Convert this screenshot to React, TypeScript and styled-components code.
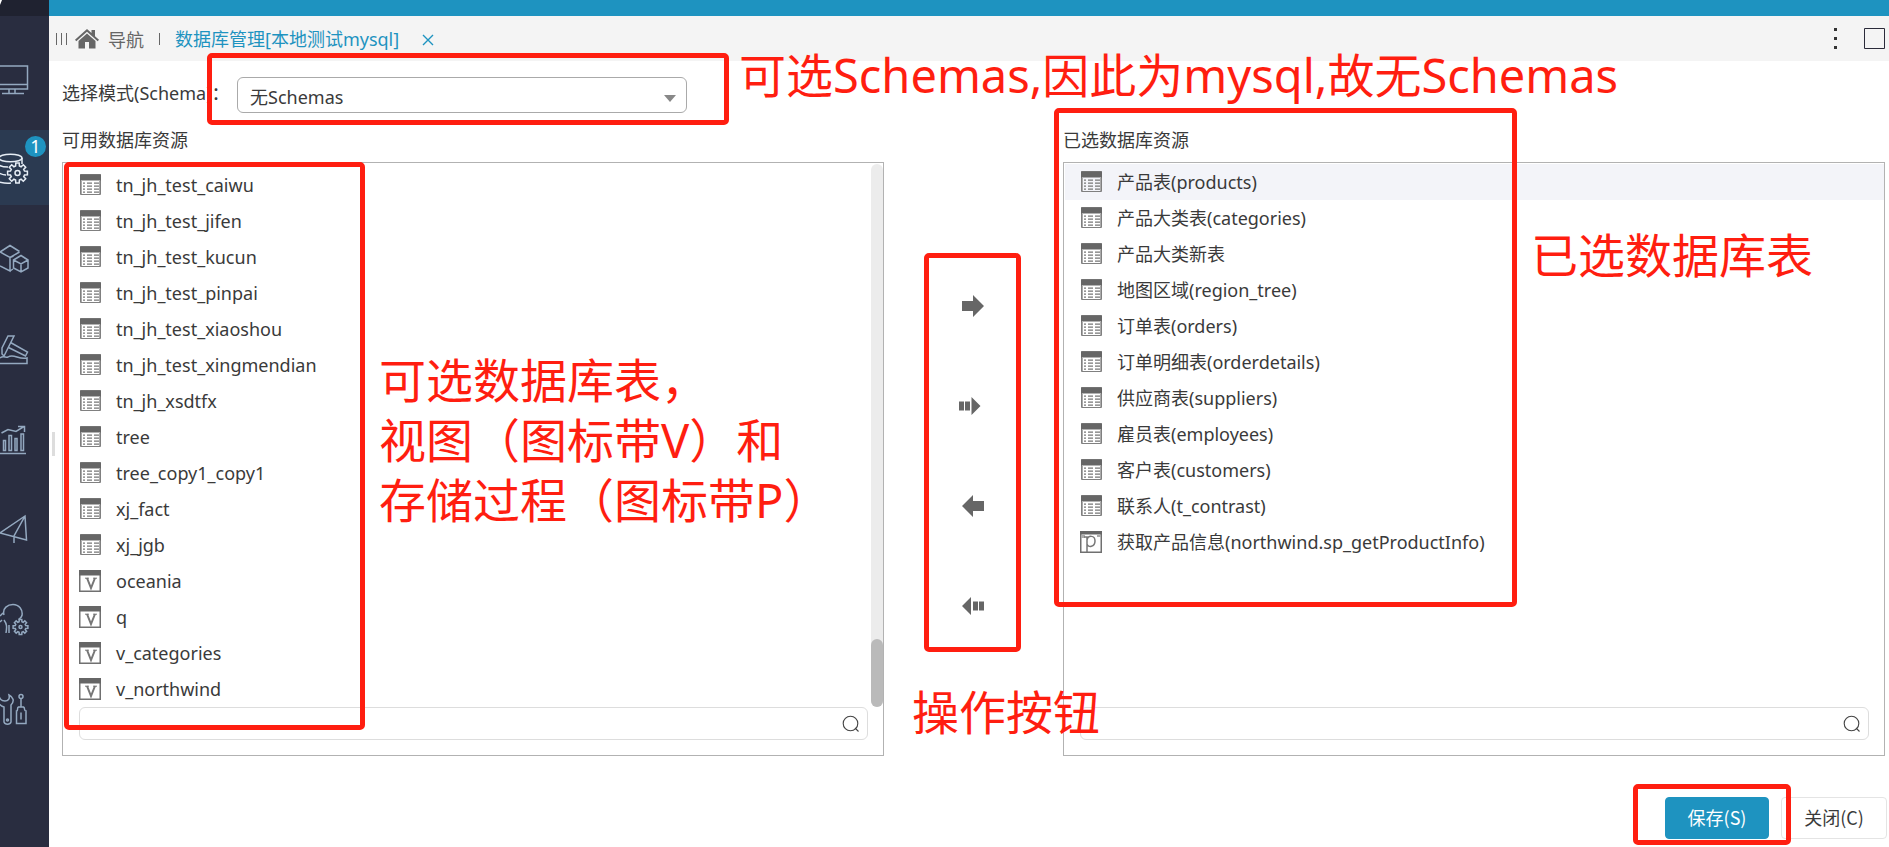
import React from "react";
import styled, { createGlobalStyle, css } from "styled-components";

const FONT = '"Noto Sans", "Noto Sans CJK SC", sans-serif';
const CJK_FONT = '"Noto Sans CJK SC", sans-serif';
const RED = "#ff1e10";
const BLUE = "#1e93c0";
const GREY = "#666666";

const GlobalStyle = createGlobalStyle`
  * { box-sizing: border-box; }
  body {
    margin: 0;
    background: #ffffff;
    color: #3a3a3a;
    font-family: ${FONT};
    font-size: 18px;
    line-height: 24px;
  }
  button, input, select { font: inherit; color: inherit; }
`;

const Shell = styled.div`
  display: flex;
  min-height: 100vh;
  overflow: hidden;
`;

const Sidebar = styled.nav`
  flex: 0 0 49px;
  background: #292d40;
`;

const Brand = styled.div`
  height: 16px;
  margin-bottom: 24px;
  background: #1f2230;
  svg { display: block; }
`;

const Menu = styled.div`
  display: flex;
  flex-direction: column;
  gap: 15px;
`;

const MenuItem = styled.button<{ $active?: boolean }>`
  position: relative;
  display: flex;
  align-items: center;
  height: 75px;
  padding: 0;
  border: 0;
  background: ${(p) => (p.$active ? "#2b3a51" : "transparent")};
  color: ${(p) => (p.$active ? "#e6edf5" : "#94a9c0")};
`;

const Badge = styled.span`
  position: absolute;
  top: 6px;
  right: 3px;
  width: 21px;
  height: 21px;
  border-radius: 50%;
  background: ${BLUE};
  color: #ffffff;
  line-height: 21px;
  text-align: center;
`;

const Main = styled.div`
  position: relative;
  flex: 1;
  min-width: 0;
`;

const TopBar = styled.div`
  height: 16px;
  background: ${BLUE};
`;

const TabBar = styled.header`
  display: flex;
  align-items: center;
  height: 45px;
  padding: 0 4px 0 7px;
  background: #f4f4f4;
  font-family: ${CJK_FONT};
`;

const NavLink = styled.a`
  display: flex;
  align-items: center;
  gap: 9px;
  color: ${GREY};
  text-decoration: none;
`;

const Grip = styled.span`
  width: 11px;
  height: 12px;
  margin-right: 8px;
  border: solid ${GREY};
  border-width: 0 1px;
  background: linear-gradient(${GREY}, ${GREY}) center / 1px 100% no-repeat;
`;

const Separator = styled.span`
  width: 1px;
  height: 12px;
  margin: 0 15px;
  background: ${GREY};
`;

const TabLink = styled.a`
  color: ${BLUE};
  text-decoration: none;
  font-family: ${FONT};
`;

const IconButton = styled.button`
  display: flex;
  align-items: center;
  justify-content: center;
  padding: 0;
  border: 0;
  background: none;
`;

const CloseTab = styled(IconButton)`
  margin-left: 23px;
  padding-top: 3px;
  color: ${BLUE};
`;

const WindowTools = styled.div`
  display: flex;
  align-items: center;
  gap: 26px;
  margin-left: auto;
`;

const Splitter = styled.div`
  position: absolute;
  top: 432px;
  left: 3px;
  width: 3px;
  height: 24px;
  background: #dddddd;
`;

const Content = styled.main`
  padding: 16px 4px 0 13px;
`;

const SchemaRow = styled.div`
  display: flex;
  align-items: center;
  height: 36px;
`;

const SchemaLabel = styled.label`
  flex: 0 0 175px;
  padding-bottom: 4px;
  white-space: nowrap;
`;

const SelectWrap = styled.div`
  position: relative;
  width: 450px;
  height: 36px;
`;

const Select = styled.select`
  appearance: none;
  width: 100%;
  height: 100%;
  padding: 4px 40px 0 12px;
  border: 1px solid #aaaaaa;
  border-radius: 6px;
  background: #ffffff;
`;

const Caret = styled.svg`
  position: absolute;
  top: 18px;
  right: 11px;
  pointer-events: none;
`;

const Transfer = styled.div`
  display: grid;
  grid-template-columns: 1fr 179px 1fr;
  padding-top: 15px;
`;

const Column = styled.section`
  position: relative;
  min-width: 0;
`;

const Heading = styled.h2`
  margin: 0 0 10px;
  font-size: 18px;
  font-weight: 400;
  line-height: 24px;
`;

const Panel = styled.div`
  display: flex;
  flex-direction: column;
  height: 594px;
  border: 1px solid #b2b2b2;
`;

const ListArea = styled.div`
  display: flex;
  flex: 1;
  min-height: 0;
`;

const List = styled.ul<{ $top: number }>`
  flex: 1;
  min-width: 0;
  margin: 0;
  padding: ${(p) => p.$top}px 0 0;
  list-style: none;
`;

const Row = styled.li<{ $selected?: boolean }>`
  display: flex;
  align-items: center;
  gap: 15px;
  height: 36px;
  padding-left: 15px;
  margin-left: 1px;
  white-space: nowrap;
  ${(p) => p.$selected && css`background: #f3f4f9;`}
`;

const ScrollTrack = styled.div`
  display: flex;
  flex-direction: column;
  justify-content: flex-end;
  width: 12px;
  margin-top: 1px;
  border-radius: 6px;
  background: #ececec;
`;

const ScrollThumb = styled.div`
  height: 68px;
  border-radius: 6px;
  background: #bababa;
`;

const SearchBox = styled.div`
  display: flex;
  align-items: center;
  height: 33px;
  margin: 0 15px 15px 16px;
  padding-right: 7px;
  border: 1px solid #dddddd;
  border-radius: 6px;
`;

const SearchInput = styled.input`
  flex: 1;
  min-width: 0;
  height: 28px;
  padding: 0 8px;
  border: 0;
  outline: 0;
  background: none;
`;

const Operations = styled.div`
  position: relative;
  display: flex;
  flex-direction: column;
  align-items: center;
  gap: 68px;
  padding: 162px 2px 0 0;
`;

const MoveButton = styled(IconButton)`
  width: 40px;
  height: 32px;
  color: ${GREY};
`;

const Footer = styled.footer`
  display: flex;
  justify-content: flex-end;
  gap: 12px;
  padding: 41px 2px 8px 0;
  margin-right: -4px;
`;

const ButtonHolder = styled.div`
  position: relative;
`;

const ActionButton = styled.button<{ $primary?: boolean }>`
  height: 42px;
  width: ${(p) => (p.$primary ? 104 : 106)}px;
  padding: 0 0 2px;
  border: 1px solid ${(p) => (p.$primary ? BLUE : "#e4e4e4")};
  border-radius: 4px;
  background: ${(p) => (p.$primary ? BLUE : "#ffffff")};
  color: ${(p) => (p.$primary ? "#ffffff" : "#3a3a3a")};
  font-family: ${CJK_FONT};
`;

interface MarkProps { $x: number; $y: number; $w: number; $h: number }

const Mark = styled.div<MarkProps>`
  position: absolute;
  z-index: 2;
  left: ${(p) => p.$x}px;
  top: ${(p) => p.$y}px;
  width: ${(p) => p.$w}px;
  height: ${(p) => p.$h}px;
  border: 5px solid ${RED};
  border-radius: 5px;
  pointer-events: none;
`;

const Note = styled.p<{ $x: number; $y: number }>`
  position: absolute;
  z-index: 3;
  left: ${(p) => p.$x}px;
  top: ${(p) => p.$y}px;
  margin: 0;
  color: ${RED};
  font-size: 47px;
  line-height: 60px;
  white-space: nowrap;
  pointer-events: none;
`;

type Kind = "table" | "view" | "proc";

const TableIcon = () => (
  <svg width="22" height="22" viewBox="0 0 22 22" fill="none">
    <path d="M1.5 .5h20v20h-20z" stroke="#808080" />
    <path d="M1 .5h21v6H1z" fill="#666" />
    <path d="M2 7h1v13H2zM20 7h1v13h-1z" fill="#aaa" />
    <g stroke="#777" strokeWidth="1.3">
      <path d="M4 9.2h2M8 9.2h5M15 9.2h5M4 12.2h2M8 12.2h5M15 12.2h5M4 15.2h2M8 15.2h5M15 15.2h5M4 18.2h2M8 18.2h5M15 18.2h5" />
    </g>
  </svg>
);

const ViewIcon = () => (
  <svg width="22" height="22" viewBox="0 0 22 22" fill="none">
    <path d="M.75 .75h20.5v20.5H.75z" stroke="#707070" strokeWidth="1.5" />
    <path d="M0 0h22v5.5H0z" fill="#666" />
    <path d="M6 8.2h4M14 8.2h4" stroke="#777" />
    <path d="M8 8l4 10 4-10" stroke="#777" strokeWidth="2" />
  </svg>
);

const ProcIcon = () => (
  <svg width="22" height="22" viewBox="0 0 22 22" fill="none">
    <path d="M.75 .75h20.5v20.5H.75z" stroke="#707070" strokeWidth="1.5" />
    <path d="M0 0h22v3.5H0z" fill="#666" />
    <path d="M1 4h4v3H1zM17 4h4v2h-4z" fill="#aaa" />
    <path d="M4 6h3v15M7 9c1-5 8-5 8 1s-7 7-8 3" stroke="#777" strokeWidth="1.5" />
  </svg>
);

const icons: Record<Kind, React.FC> = { table: TableIcon, view: ViewIcon, proc: ProcIcon };

const SearchIcon = () => (
  <svg width="18" height="18" viewBox="0 0 18 18" fill="none" stroke="#444" strokeWidth="1.1">
    <circle cx="8.5" cy="8.5" r="7.3" />
    <path d="M13 13l3.5 3.5" />
  </svg>
);

const arrows: { label: string; d: string }[] = [
  { label: "添加", d: "M2 7h11V1l11 11-11 11v-6H2z" },
  { label: "全部添加", d: "M-1 7.5h5v9h-5zM5 7.5h5v9H5zM11.500 3l9 9-9 9z" },
  { label: "移除", d: "M24 7H13V1L2 12l11 11v-6h11z" },
  { label: "全部移除", d: "M24 7.500h-5v9h5zM18 7.500h-5v9h5zM11 3l-9 9 9 9z" },
];

const gear = (cx: number, cy: number, r: number) => {
  const pts: string[] = [];
  for (let i = 0; i < 8; i++) {
    for (const [off, rad] of [[-0.26, r * 0.72], [-0.17, r], [0.17, r], [0.26, r * 0.72]]) {
      const a = (i * Math.PI) / 4 + off;
      pts.push(`${(cx + rad * Math.cos(a)).toFixed(1)},${(cy + rad * Math.sin(a)).toFixed(1)}`);
    }
  }
  return pts.join(" ");
};

const menu: { label: string; active?: boolean; art: React.ReactNode }[] = [
  {
    label: "监控",
    art: (
      <>
        <path d="M-4 6h31.500v23H-4M-4 24.500h31.500M9 29v4M15 29v4M2 33.500h22" />
      </>
    ),
  },
  {
    label: "数据库",
    active: true,
    art: (
      <>
        <ellipse cx="10.500" cy="8" rx="11.500" ry="3.800" />
        <path d="M22 8v6M-1 15c3 2 6 2 9 2M-1 23c2 1 4 2 7 2M-1 32c4 1 8 2 12 1" />
        <polygon points={gear(17.5, 23, 10)} />
        <circle cx="17.500" cy="23" r="2.500" />
      </>
    ),
  },
  {
    label: "模型",
    art: (
      <>
        <path d="M0 12l10-6.500L19.500 11.500M0 12l10 5.500L19.500 12M10 17.500V31L0 26M13.500 16L10 17.500M13 29l-3 2" />
        <path d="M21 15.500l7 4.500v8l-7 4-7.500-4v-8zM13.500 20l7.500 4 7-4M21 24v8" />
      </>
    ),
  },
  {
    label: "加工",
    art: (
      <>
        <path d="M8 6h6L4 26l-2-2V18zM10.500 12.500L27.500 22l-2 4L8.500 17.500" />
        <path d="M0 28c3-3 6 0 8-1 3-2 6-1 9 0s6 2 10 1v5.500H0" />
      </>
    ),
  },
  {
    label: "分析",
    art: (
      <>
        <path d="M0 33.500h26M1.500 13L8 9.500l8 2L24 6.500M18 6.500h6.500V12" />
        <path d="M3.500 20.500h2v10h-2zM9 15.500h2.500v15H9zM15 18.500h2v12h-2zM21 14h2.500v16.500H21z" />
      </>
    ),
  },
  { label: "发布", art: <path d="M25 6L0 23l26.500 7zM25 6L14 26v7" /> },
  {
    label: "智能",
    art: (
      <>
        <path d="M4 15c-2-7 4-10.500 9-10.500 6 0 10 5 9 11-.5 2-2 3-3.500 4M0 16l3-3M6 33c1-6 1-9-2-13M0 22l2-2M9 33v-8" />
        <polygon points={gear(20.5, 27, 7.5)} />
        <circle cx="20.500" cy="27" r="1.500" />
      </>
    ),
  },
  {
    label: "工具",
    art: (
      <>
        <path d="M-1 6c1 4 3 5 6 5s5-2 4-6c4 2 6 6 2 10v17c-1 3-6 3-7 0V17C0 16-1 14-2 12" />
        <circle cx="7.500" cy="30" r="1" />
        <circle cx="21" cy="6.500" r="2" />
        <path d="M21 9v8M18.500 17h5c2 1 0 4 2.500 4v12.500H16.500V21c2 0 0-3 2-4zM21 22.500v7" />
      </>
    ),
  },
];

const available: [Kind, string][] = [
  ["table", "tn_jh_test_caiwu"],
  ["table", "tn_jh_test_jifen"],
  ["table", "tn_jh_test_kucun"],
  ["table", "tn_jh_test_pinpai"],
  ["table", "tn_jh_test_xiaoshou"],
  ["table", "tn_jh_test_xingmendian"],
  ["table", "tn_jh_xsdtfx"],
  ["table", "tree"],
  ["table", "tree_copy1_copy1"],
  ["table", "xj_fact"],
  ["table", "xj_jgb"],
  ["view", "oceania"],
  ["view", "q"],
  ["view", "v_categories"],
  ["view", "v_northwind"],
];

const chosen: [Kind, string][] = [
  ["table", "产品表(products)"],
  ["table", "产品大类表(categories)"],
  ["table", "产品大类新表"],
  ["table", "地图区域(region_tree)"],
  ["table", "订单表(orders)"],
  ["table", "订单明细表(orderdetails)"],
  ["table", "供应商表(suppliers)"],
  ["table", "雇员表(employees)"],
  ["table", "客户表(customers)"],
  ["table", "联系人(t_contrast)"],
  ["proc", "获取产品信息(northwind.sp_getProductInfo)"],
];

const ResourceRow = ({ kind, name, selected }: { kind: Kind; name: string; selected?: boolean }) => {
  const Icon = icons[kind];
  return (
    <Row $selected={selected}>
      <Icon />
      <span>{name}</span>
    </Row>
  );
};

const Search = ({ label }: { label: string }) => (
  <SearchBox>
    <SearchInput type="text" aria-label={label} />
    <IconButton aria-label={`搜索${label}`}>
      <SearchIcon />
    </IconButton>
  </SearchBox>
);

export default function App() {
  return (
    <>
      <GlobalStyle />
      <Shell>
        <Sidebar>
          <Brand>
            <svg width="6" height="8" viewBox="0 0 6 8"><path d="M0 5V0h2z" fill="#fff" /></svg>
          </Brand>
          <Menu>
            {menu.map((m) => (
              <MenuItem key={m.label} $active={m.active} aria-label={m.label}>
                <svg width="30" height="36" viewBox="0 0 30 36" fill="none" stroke="currentColor" strokeWidth="1.5">
                  {m.art}
                </svg>
                {m.active && <Badge>1</Badge>}
              </MenuItem>
            ))}
          </Menu>
        </Sidebar>
        <Main>
          <TopBar />
          <TabBar>
            <Grip />
            <NavLink href="#nav">
              <svg width="24" height="20" viewBox="0 0 24 20" fill="#666">
                <path d="M12 0l4.500 4V1H20v6.200l4 3.600-1.300 1.400L12 2.800 1.300 12.200 0 10.800z" />
                <path d="M12 4.500l8.500 7.500v7.500H14V13h-4v6.500H3.500V12z" />
              </svg>
              导航
            </NavLink>
            <Separator />
            <TabLink href="#datasource">数据库管理[本地测试mysql]</TabLink>
            <CloseTab aria-label="关闭标签">
              <svg width="12" height="12" viewBox="0 0 12 12" stroke="currentColor" strokeWidth="1.400">
                <path d="M1 1l10 10M11 1L1 11" />
              </svg>
            </CloseTab>
            <WindowTools>
              <IconButton aria-label="更多">
                <svg width="4" height="22" viewBox="0 0 4 22" fill="#333">
                  <path d="M0 0h3v3H0zM0 9h3v3H0zM0 18h3v3H0z" />
                </svg>
              </IconButton>
              <IconButton aria-label="最大化">
                <svg width="21" height="21" viewBox="0 0 21 21" fill="none" stroke="#2b2b3a">
                  <path d="M.5 .5h20v20H.5z" />
                </svg>
              </IconButton>
            </WindowTools>
          </TabBar>
          <Splitter />
          <Content>
            <SchemaRow>
              <SchemaLabel htmlFor="schema">选择模式(Schema)：</SchemaLabel>
              <SelectWrap>
                <Select id="schema" defaultValue="none">
                  <option value="none">无Schemas</option>
                </Select>
                <Caret width="12" height="8" viewBox="0 0 12 8">
                  <path d="M0 0h12L6 7z" fill="#888" />
                </Caret>
                <Mark $x={-30} $y={-24} $w={522} $h={72} />
                <Note $x={502} $y={-32}>可选Schemas,因此为mysql,故无Schemas</Note>
              </SelectWrap>
            </SchemaRow>
            <Transfer>
              <Column>
                <Heading>可用数据库资源</Heading>
                <Panel>
                  <ListArea>
                    <List $top={4}>
                      {available.map(([kind, name]) => (
                        <ResourceRow key={name} kind={kind} name={name} />
                      ))}
                    </List>
                    <ScrollTrack>
                      <ScrollThumb />
                    </ScrollTrack>
                  </ListArea>
                  <Search label="可用数据库资源" />
                </Panel>
                <Mark $x={2} $y={34} $w={301} $h={568} />
                <Note $x={317} $y={222}>
                  可选数据库表，
                  <br />
                  视图（图标带V）和
                  <br />
                  存储过程（图标带P）
                </Note>
              </Column>
              <Operations>
                {arrows.map((a) => (
                  <MoveButton key={a.label} aria-label={a.label}>
                    <svg width="26" height="24" viewBox="0 0 26 24" fill="currentColor" overflow="visible">
                      <path d={a.d} />
                    </svg>
                  </MoveButton>
                ))}
                <Mark $x={40} $y={125} $w={97} $h={399} />
                <Note $x={28} $y={554}>操作按钮</Note>
              </Operations>
              <Column>
                <Heading>已选数据库资源</Heading>
                <Panel>
                  <ListArea>
                    <List $top={1}>
                      {chosen.map(([kind, name], i) => (
                        <ResourceRow key={name} kind={kind} name={name} selected={i === 0} />
                      ))}
                    </List>
                  </ListArea>
                  <Search label="已选数据库资源" />
                </Panel>
                <Mark $x={-9} $y={-20} $w={463} $h={499} />
                <Note $x={468} $y={97}>已选数据库表</Note>
              </Column>
            </Transfer>
            <Footer>
              <ButtonHolder>
                <ActionButton $primary>保存(S)</ActionButton>
                <Mark $x={-32} $y={-13} $w={158} $h={61} />
              </ButtonHolder>
              <ActionButton>关闭(C)</ActionButton>
            </Footer>
          </Content>
        </Main>
      </Shell>
    </>
  );
}
